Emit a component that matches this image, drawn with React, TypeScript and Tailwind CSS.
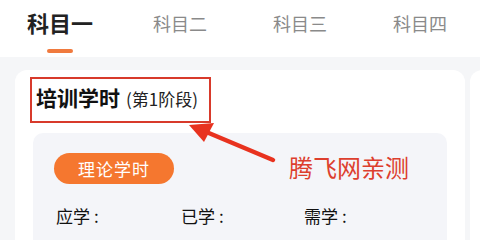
const tabs = ['科目一', '科目二', '科目三', '科目四'];

export default function App() {
  return (
    <div
      className="relative w-[480px] h-[240px] overflow-hidden bg-[#f5f6f8]"
      style={{ fontFamily: '"Noto Sans CJK SC", "Noto Sans", sans-serif' }}
    >
      {/* Tabs */}
      <div className="grid grid-cols-4 h-[57px] bg-white">
        {tabs.map((t, i) => (
          <div key={t} className="flex flex-col items-center pt-[7px]">
            <span
              className={
                i === 0
                  ? 'text-[22px] leading-[30px] font-bold text-[#222]'
                  : 'text-[18px] leading-[30px] pt-[1px] text-[#8a8a8a]'
              }
            >
              {t}
            </span>
            {i === 0 && <div className="mt-[12px] w-[26px] h-[4px] rounded-full bg-[#f07a3e]" />}
          </div>
        ))}
      </div>

      {/* Cards */}
      <div className="flex gap-[5px] pl-[15px] pt-[13px]">
        <div className="relative shrink-0 w-[450px] h-[200px] rounded-[12px] bg-white px-[18px] pt-[13px]">
          <div className="pl-[3px] flex items-baseline text-[#111]">
            <span className="text-[21px] leading-[29px] font-bold">培训学时</span>
            <span className="ml-[6px] text-[17px] text-[#222]">(第1阶段)</span>
          </div>

          {/* annotation box */}
          <div className="absolute left-[15px] top-[7px] w-[181px] h-[46px] border-2 border-[#d83a2b]" />

          <div className="mt-[21px] rounded-[10px] bg-[#f4f5f9] h-[120px] pl-[21px] pt-[20px]">
            <div className="w-[120px] h-[31px] rounded-full bg-[#f5772f] flex items-center justify-center text-white text-[17px] tracking-[1px]">
              理论学时
            </div>
            <div className="grid grid-cols-3 w-[372px] mt-[20px] text-[17px] leading-[24px] text-[#111]">
              <span className="pl-[2px]">应学<span className="ml-[4px]">:</span></span>
              <span className="pl-[3px]">已学<span className="ml-[4px]">:</span></span>
              <span className="pl-[2px]">需学<span className="ml-[4px]">:</span></span>
            </div>
          </div>
        </div>
        <div className="shrink-0 w-[450px] h-[200px] rounded-[12px] bg-white" />
      </div>

      {/* arrow annotation */}
      <svg className="absolute left-0 top-0" width="480" height="240" viewBox="0 0 480 240">
        <line x1="273" y1="160" x2="204" y2="131" stroke="#e8321f" strokeWidth="4.5" strokeLinecap="round" />
        <polygon points="189,125 214,123 204,142" fill="#e8321f" />
      </svg>
      <div className="absolute left-[289px] top-[150px] text-[24px] leading-[34px] text-[#dd3f2e]">
        腾飞网亲测
      </div>
    </div>
  );
}
